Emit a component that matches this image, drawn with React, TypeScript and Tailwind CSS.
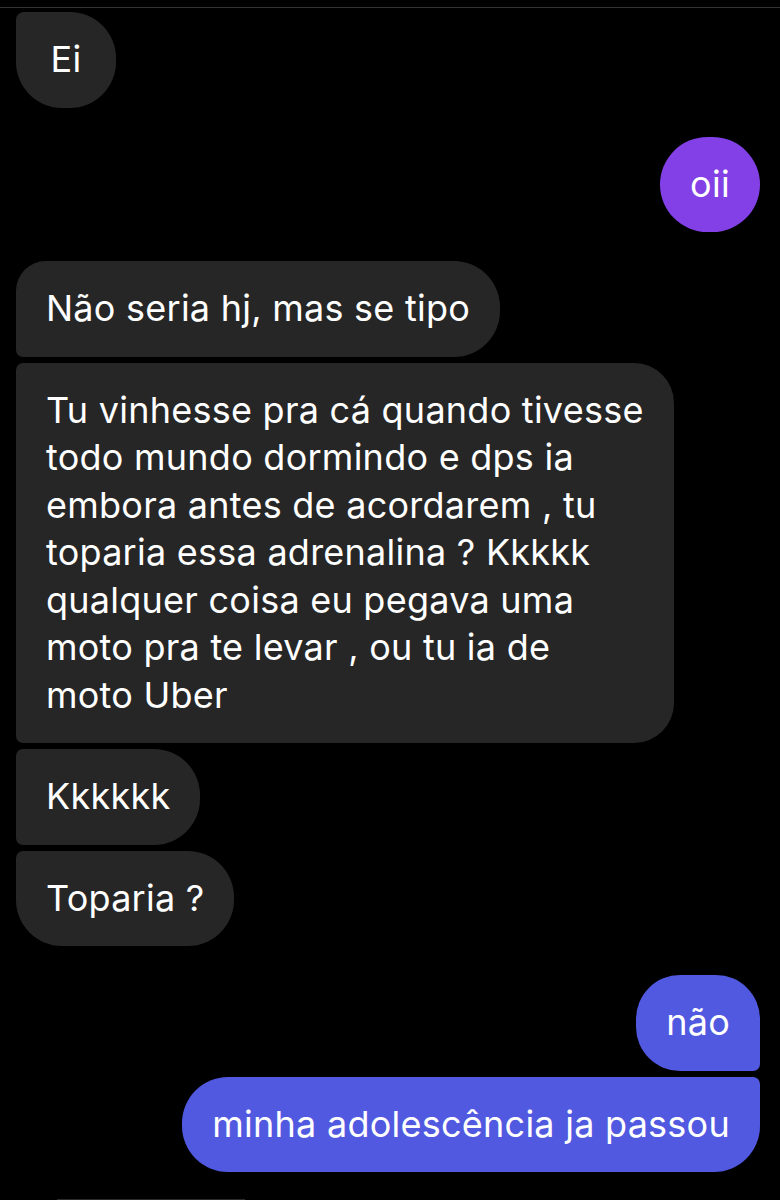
import React from "react";

function Bubble({
  children,
  color,
  corners,
  center,
}: {
  children: React.ReactNode;
  color: string;
  corners: string;
  center?: boolean;
}) {
  return (
    <div
      className={`${color} ${corners} min-w-[100px] px-[30px] py-[24px] text-[36px] leading-[47.5px] text-white whitespace-nowrap ${
        center ? "text-center" : ""
      }`}
    >
      {children}
    </div>
  );
}

export default function App() {
  const gray = "bg-[#262626]";
  const purple = "bg-[#8240e6]";
  const blue = "bg-[#5059e0]";
  return (
    <div className="w-[780px] h-[1200px] bg-black overflow-hidden flex flex-col font-['Inter','Liberation_Sans',sans-serif] tracking-[0.25px]">
      <div className="mt-[7px] h-px bg-[#333333]" />
      <div className="flex flex-col pt-[4px] pl-[16px] pr-[20px] gap-[29px]">
        {/* incoming */}
        <div className="flex">
          <Bubble
            color={gray}
            center
            corners="rounded-tl-[8px] rounded-tr-[46px] rounded-br-[46px] rounded-bl-[46px]"
          >
            Ei
          </Bubble>
        </div>

        {/* outgoing */}
        <div className="flex justify-end">
          <Bubble
            color={purple}
            center
            corners="rounded-tl-[48px] rounded-tr-[48px] rounded-br-[48px] rounded-bl-[48px]"
          >
            oii
          </Bubble>
        </div>

        {/* incoming group */}
        <div className="flex flex-col items-start gap-[6px]">
          <Bubble
            color={gray}
            corners="rounded-tl-[30px] rounded-tr-[46px] rounded-br-[46px] rounded-bl-[7px]"
          >
            Não seria hj, mas se tipo
          </Bubble>
          <Bubble
            color={gray}
            corners="rounded-tl-[7px] rounded-tr-[40px] rounded-br-[40px] rounded-bl-[7px]"
          >
            Tu vinhesse pra cá quando tivesse
            <br />
            todo mundo dormindo e dps ia
            <br />
            embora antes de acordarem , tu
            <br />
            toparia essa adrenalina ? Kkkkk
            <br />
            qualquer coisa eu pegava uma
            <br />
            moto pra te levar , ou tu ia de
            <br />
            moto Uber
          </Bubble>
          <Bubble
            color={gray}
            corners="rounded-tl-[7px] rounded-tr-[46px] rounded-br-[46px] rounded-bl-[7px]"
          >
            Kkkkkk
          </Bubble>
          <Bubble
            color={gray}
            corners="rounded-tl-[7px] rounded-tr-[46px] rounded-br-[46px] rounded-bl-[46px]"
          >
            Toparia ?
          </Bubble>
        </div>

        {/* outgoing group */}
        <div className="flex flex-col items-end gap-[6px]">
          <Bubble
            color={blue}
            corners="rounded-tl-[44px] rounded-tr-[44px] rounded-br-[7px] rounded-bl-[44px]"
          >
            não
          </Bubble>
          <Bubble
            color={blue}
            corners="rounded-tl-[46px] rounded-tr-[7px] rounded-br-[46px] rounded-bl-[46px]"
          >
            minha adolescência ja passou
          </Bubble>
        </div>
      </div>
      <div className="mt-auto ml-[57px] w-[188px] h-px bg-[#2a2a2a]" />
    </div>
  );
}
